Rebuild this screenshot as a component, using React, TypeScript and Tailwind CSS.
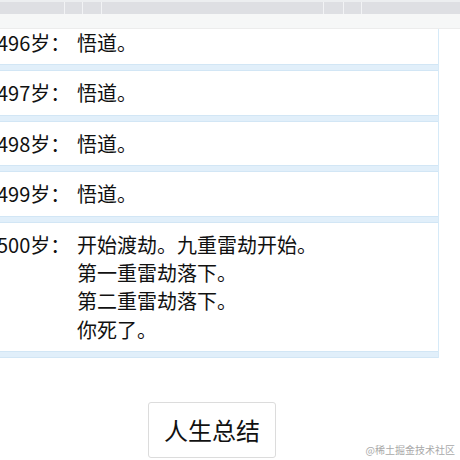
const rows = [
  { age: 496, lines: ["悟道。"] },
  { age: 497, lines: ["悟道。"] },
  { age: 498, lines: ["悟道。"] },
  { age: 499, lines: ["悟道。"] },
  { age: 500, lines: ["开始渡劫。九重雷劫开始。", "第一重雷劫落下。", "第二重雷劫落下。", "你死了。"] },
];

function Band() {
  return <div className="h-[7px] bg-[#e1effa] border-y border-[#d2e6f5]" />;
}

export default function App() {
  return (
    <div
      className="relative w-[460px] h-[460px] overflow-hidden bg-white text-[#111]"
      style={{ fontFamily: '"Noto Sans CJK SC", "Noto Sans", sans-serif' }}
    >
      {/* top bar */}
      <div className="h-[14px] bg-[#dedfe3] border-t-[2px] border-[#eceef0] flex">
        <div className="w-[64px]" />
        <div className="w-[18px] border-l border-[#f2f3f5]" />
        <div className="w-[19px] border-l border-[#f2f3f5]" />
        <div className="w-[222px] border-l border-[#f2f3f5]" />
        <div className="w-[20px] border-l border-[#f2f3f5]" />
        <div className="w-[18px] border-l border-[#f2f3f5]" />
        <div className="flex-1 border-l border-[#f2f3f5]" />
      </div>
      <div className="h-[15px] bg-[#f6f7f7] border-b border-[#ececec]" />

      {/* log list */}
      <div className="h-[331px] overflow-hidden">
        <div className="-mt-[8px] ml-[-14px] w-[453px] border-r border-[#d6eaf8]">
          {rows.map((r) => (
            <div key={r.age}>
              <div className="flex pt-[8px] pb-[7px] pl-[11px] text-[20px] leading-[28.4px] bg-white">
                <span className="w-[80px] shrink-0">{r.age}岁：</span>
                <div>
                  {r.lines.map((l) => (
                    <div key={l}>{l}</div>
                  ))}
                </div>
              </div>
              <Band />
            </div>
          ))}
        </div>
      </div>

      {/* summary button */}
      <div className="flex justify-center pt-[42px] pr-[36px]">
        <button className="h-[56px] w-[128px] border border-[#dcdcdc] rounded-[3px] bg-white text-[24px] text-[#111]">
          人生总结
        </button>
      </div>

      <div className="absolute right-[5px] bottom-[3px] text-[10px] text-[#a9a9a9] leading-[14px]">
        @稀土掘金技术社区
      </div>
    </div>
  );
}
